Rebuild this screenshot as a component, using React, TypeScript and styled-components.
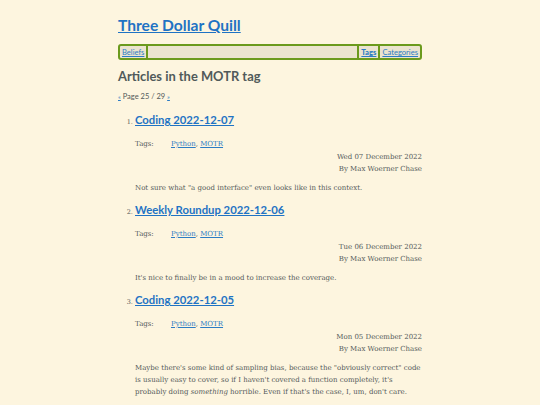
import React from 'react';
import styled, { createGlobalStyle } from 'styled-components';

type Article = {
    title: string;
    date: string;
    summary: React.ReactNode;
};

const GlobalStyle = createGlobalStyle`
    html, body {
        margin: 0;
        padding: 0;
        background: #fdf5df;
    }
    body {
        font-family: "DejaVu Serif", serif;
        color: #545a5a;
    }
`;

const Page = styled.div`
    width: 304px;
    margin: 0 auto;
    padding-top: 14px;
`;

const SiteTitle = styled.h1`
    font-family: Lato, "Noto Sans", sans-serif;
    font-size: 15.6px;
    font-weight: 700;
    line-height: 22px;
    margin: 0 0 8px;
    a {
        color: #1f73c4;
    }
`;

const Nav = styled.nav`
    display: flex;
    align-items: stretch;
    height: 12px;
    border: 2px solid #6b9a1d;
    border-radius: 3px;
    background: #ebe4cf;
    font-family: Lato, "Noto Sans", sans-serif;
    font-size: 7.6px;
    line-height: 12px;
`;

const NavItem = styled.a<{ $current?: boolean }>`
    color: #2c7cc4;
    padding: 0 2px;
    font-weight: ${(p) => (p.$current ? 900 : 400)};
`;

const NavSep = styled.span`
    width: 2px;
    background: #6b9a1d;
`;

const NavFill = styled.span`
    flex: 1;
`;

const Heading = styled.h2`
    font-family: Lato, "Noto Sans", sans-serif;
    font-size: 12.9px;
    font-weight: 700;
    color: #505a5a;
    line-height: 16px;
    margin: 8px 0 0;
`;

const Pager = styled.p`
    font-family: Lato, "Noto Sans", sans-serif;
    font-size: 7.5px;
    line-height: 10px;
    margin: 8px 0 0;
    a {
        color: #2c7cc4;
        font-size: 6.5px;
    }
`;

const List = styled.ol`
    margin: 10px 0 0;
    padding-left: 17px;
    font-size: 7px;
    line-height: 12px;
`;

const Item = styled.li`
    margin-bottom: 8px;
    &::marker {
        font-size: 6.5px;
    }
`;

const ItemTitle = styled.h3`
    font-family: Lato, "Noto Sans", sans-serif;
    font-size: 11.3px;
    font-weight: 700;
    line-height: 16px;
    margin: 0;
    a {
        color: #1f73c4;
    }
`;

const TagsRow = styled.div`
    display: flex;
    margin-top: 10px;
    a {
        color: #2c7cc4;
    }
`;

const TagsLabel = styled.span`
    width: 36px;
`;

const Meta = styled.div`
    text-align: right;
    margin-top: 1px;
`;

const Summary = styled.p`
    margin: 7px 0 0;
`;

const articles: Article[] = [
    {
        title: 'Coding 2022-12-07',
        date: 'Wed 07 December 2022',
        summary: <>Not sure what "a good interface" even looks like in this context.</>,
    },
    {
        title: 'Weekly Roundup 2022-12-06',
        date: 'Tue 06 December 2022',
        summary: <>It's nice to finally be in a mood to increase the coverage.</>,
    },
    {
        title: 'Coding 2022-12-05',
        date: 'Mon 05 December 2022',
        summary: (
            <>
                Maybe there's some kind of sampling bias, because the "obviously correct" code
                <br />
                is usually easy to cover, so if I haven't covered a function completely, it's
                <br />
                probably doing <em>something</em> horrible. Even if that's the case, I, um, don't care.
            </>
        ),
    },
];

const App: React.FC = () => {
    return (
        <Page>
            <GlobalStyle />
            <SiteTitle>
                <a href="#">Three Dollar Quill</a>
            </SiteTitle>
            <Nav>
                <NavItem href="#">Beliefs</NavItem>
                <NavSep />
                <NavFill />
                <NavSep />
                <NavItem href="#" $current>Tags</NavItem>
                <NavSep />
                <NavItem href="#">Categories</NavItem>
            </Nav>
            <Heading>Articles in the MOTR tag</Heading>
            <Pager>
                <a href="#">«</a> Page 25 / 29 <a href="#">»</a>
            </Pager>
            <List>
                {articles.map((article) => (
                    <Item key={article.title}>
                        <ItemTitle>
                            <a href="#">{article.title}</a>
                        </ItemTitle>
                        <TagsRow>
                            <TagsLabel>Tags:</TagsLabel>
                            <span>
                                <a href="#">Python</a>, <a href="#">MOTR</a>
                            </span>
                        </TagsRow>
                        <Meta>
                            {article.date}
                            <br />
                            By Max Woerner Chase
                        </Meta>
                        <Summary>{article.summary}</Summary>
                    </Item>
                ))}
            </List>
        </Page>
    );
};

export default App;
